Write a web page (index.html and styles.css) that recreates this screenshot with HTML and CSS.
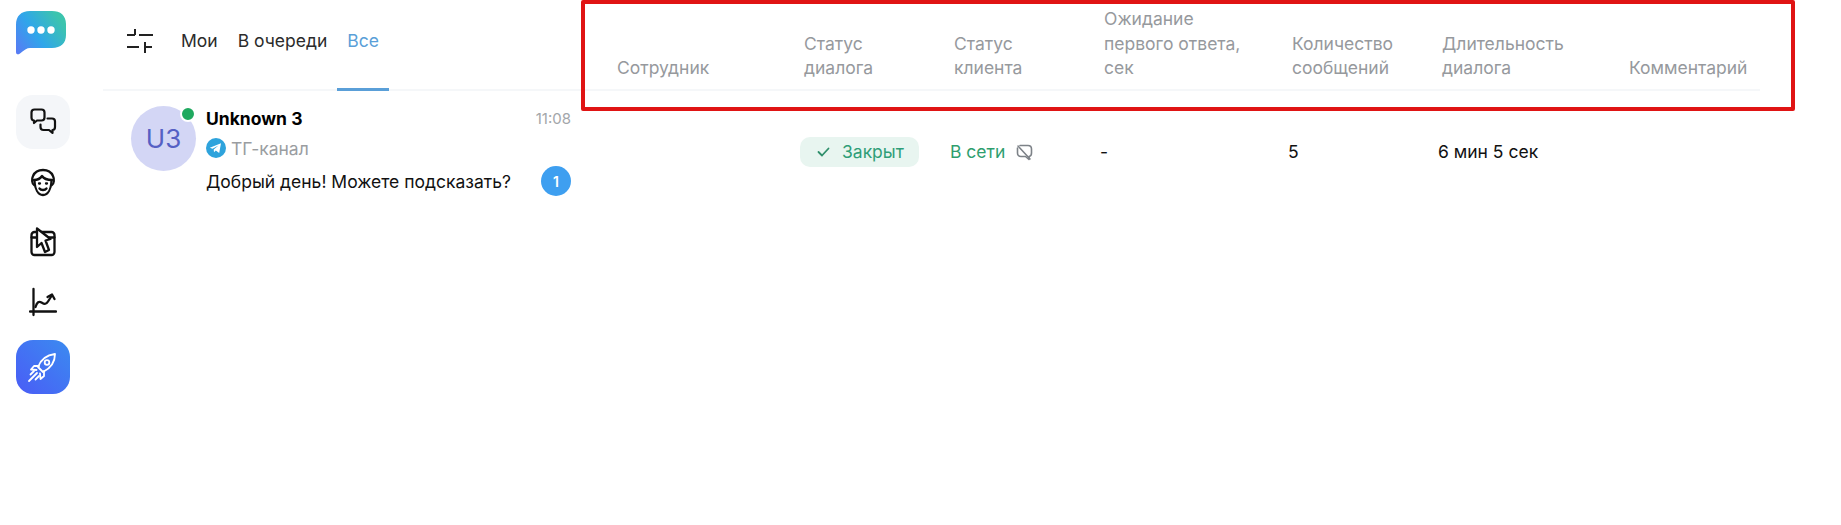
FILE: index.html
```html
<!DOCTYPE html>
<html lang="ru">
<head>
    <meta charset="UTF-8">
    <title>Диалоги</title>
    <link rel="stylesheet" href="styles.css">
</head>
<body>
    <div class="app">
        <nav class="rail">
            <svg class="logo" width="50" height="44" viewBox="0 0 50 44">
                <defs>
                    <linearGradient id="logoGrad" x1="0" y1="1" x2="1" y2="0.4">
                        <stop offset="0" stop-color="#5b78f5"/>
                        <stop offset="0.5" stop-color="#2fa6ea"/>
                        <stop offset="1" stop-color="#3cc4ae"/>
                    </linearGradient>
                </defs>
                <path d="M14 0H36C44.500 0 50 4.500 50 13V24C50 32 45 37 36 37H14C11 37 8 39 4 42.500C2 44 0 43.500 0 41V14C0 5 5 0 14 0Z" fill="url(#logoGrad)"/>
                <circle cx="15" cy="19" r="3.700" fill="#fff"/>
                <circle cx="25" cy="19" r="3.700" fill="#fff"/>
                <circle cx="35" cy="19" r="3.700" fill="#fff"/>
            </svg>

            <a class="rail-btn rail-btn-light">
                <svg width="30" height="30" viewBox="0 0 30 30" fill="none" stroke="#111" stroke-width="2.200" stroke-linejoin="round" stroke-linecap="round">
                    <path d="M3.500 5.500C3.500 3.500 4.500 2.500 6.500 2.500H13.500C15.500 2.500 16.500 3.500 16.500 5.500V10.500C16.500 12.500 15.500 13.500 13.500 13.500H9L6 16V13.500C4.500 13.500 3.500 12.500 3.500 10.500Z"/>
                    <path d="M19.500 11.500H24C26 11.500 27 12.500 27 14.500V20C27 22 26 23 24.500 23V26L21 23H15.500C13.500 23 12.500 22 12.500 20V17.500"/>
                </svg>
            </a>
            <a class="rail-btn">
                <svg width="28" height="30" viewBox="0 0 28 30" fill="none" stroke="#111" stroke-width="2.300" stroke-linecap="round" stroke-linejoin="round">
                    <path d="M5 18C3 17 2.500 12 4 9C6 4.500 10 3 14 3C18 3 22 4.500 24 9C25.500 12 25 17 23 18"/>
                    <path d="M5.500 14C6 22 9 28 14 28C19 28 22 22 22.500 14"/>
                    <path d="M5 13C9 13 11 12 13 9C15 12 19 13 23 13"/>
                    <path d="M10.500 21.500C12 23.500 16 23.500 17.500 21.500"/>
                    <path d="M10 16.500H11M17 16.500H18"/>
                </svg>
            </a>
            <a class="rail-btn">
                <svg width="28" height="30" viewBox="0 0 28 30" fill="none" stroke="#111" stroke-width="2.300" stroke-linejoin="round" stroke-linecap="round">
                    <rect x="2.500" y="5" width="23" height="23" rx="3"/>
                    <path d="M2.500 10.500H25.500"/>
                    <path d="M8 1.500L21.500 12L16.500 13.500L20 23L16 25L12.500 16L8 20Z" fill="#fff"/>
                </svg>
            </a>
            <a class="rail-btn rail-btn-last">
                <svg width="28" height="30" viewBox="0 0 28 30" fill="none" stroke="#111" stroke-width="2.300" stroke-linecap="round" stroke-linejoin="round">
                    <path d="M4.500 2V28"/>
                    <path d="M1 24.500H27"/>
                    <path d="M6.500 20C8 15 10 14 12.500 15.500C15 17 17 18 19 14.500L22.500 9"/>
                    <path d="M18.500 10L23 7.500L25.500 12"/>
                </svg>
            </a>
            <a class="rail-btn rail-btn-blue">
                <svg width="32" height="32" viewBox="0 0 32 32" fill="none" stroke="#fff" stroke-width="1.800" stroke-linecap="round" stroke-linejoin="round">
                    <path d="M11 16C14 8 20 4 28 3C28 11 24 17 16 21Z"/>
                    <circle cx="20" cy="11.500" r="2.300"/>
                    <path d="M12 15H7L4 18.500L9.500 19"/>
                    <path d="M17 20V25L13.500 28L13 22.500"/>
                    <path d="M10 22L2 30M7 20L3.500 23.500M12 25L8.500 28.500"/>
                </svg>
            </a>
        </nav>

        <section class="dialogs">
            <header class="tabs">
                <svg class="filter-icon" width="28" height="26" viewBox="0 0 28 26" fill="none" stroke="#222" stroke-width="2">
                    <path d="M1 7H9M9 1V7M13 7H27"/>
                    <path d="M1 19H13M19 19H26M19 14V25"/>
                </svg>
                <a class="tab">Мои</a>
                <a class="tab">В очереди</a>
                <a class="tab tab-active">Все</a>
            </header>
            <div class="dialog">
                <div class="avatar">U3<span class="online-dot"></span></div>
                <div class="dialog-body">
                    <div class="dialog-line">
                        <b class="dialog-name">Unknown 3</b>
                        <span class="dialog-time">11:08</span>
                    </div>
                    <div class="dialog-source">
                        <svg width="20" height="20" viewBox="0 0 20 20">
                            <circle cx="10" cy="10" r="10" fill="#2ea3dc"/>
                            <path d="M3.800 9.800L15 5.300L13.200 15L9.800 12.600L8 14.300L7.700 11.400L12.500 7.500L6.500 10.800Z" fill="#fff"/>
                        </svg>
                        ТГ-канал
                    </div>
                    <div class="dialog-line dialog-line-last">
                        <span class="dialog-text">Добрый день! Можете подсказать?</span>
                        <span class="unread">1</span>
                    </div>
                </div>
            </div>
        </section>

        <section class="report">
            <div class="report-head">
                <div>Сотрудник</div>
                <div>Статус<br>диалога</div>
                <div>Статус<br>клиента</div>
                <div>Ожидание<br>первого ответа,<br>сек</div>
                <div>Количество<br>сообщений</div>
                <div>Длительность<br>диалога</div>
                <div>Комментарий</div>
            </div>
            <div class="report-row">
                <div></div>
                <div>
                    <span class="status-pill">
                        <svg width="13" height="10" viewBox="0 0 13 10" fill="none" stroke="#2f8f6b" stroke-width="1.800" stroke-linecap="round" stroke-linejoin="round"><path d="M1.500 5L5 8.500L11.500 1.500"/></svg>
                        Закрыт
                    </span>
                </div>
                <div class="client-status">
                    В сети
                    <svg width="17" height="17" viewBox="0 0 17 17" fill="none" stroke="#7d8288" stroke-width="1.600" stroke-linecap="round" stroke-linejoin="round">
                        <path d="M4 1.500H12C14.500 1.500 15.500 3 15.500 5V9C15.500 11 14.500 12.300 13 12.500V15.500L9.500 12.500H5C2.700 12.500 1.500 11 1.500 9V4"/>
                        <path d="M2 2L14 15"/>
                    </svg>
                </div>
                <div>-</div>
                <div>5</div>
                <div>6 мин 5 сек</div>
                <div></div>
            </div>
        </section>
    </div>
    <div class="highlight"></div>
</body>
</html>
```

FILE: styles.css
```css
* {
    margin: 0;
    padding: 0;
    box-sizing: border-box;
}

body {
    height: 525px;
    background: #fff;
    font-family: 'Inter', sans-serif;
    font-size: 17.5px;
    color: #111;
    overflow: hidden;
}

.app {
    display: flex;
    height: 100%;
}

/* left icon rail */
.rail {
    width: 103px;
    flex-shrink: 0;
    padding: 11px 0 0 16px;
    display: flex;
    flex-direction: column;
}

.logo {
    margin-bottom: 40px;
}

.rail-btn {
    width: 54px;
    height: 54px;
    margin-bottom: 6px;
    border-radius: 17px;
    display: flex;
    align-items: center;
    justify-content: center;
}

.rail-btn-last {
    margin-bottom: 11px;
}

.rail-btn-light {
    background: #f4f6f9;
}

.rail-btn-blue {
    background: linear-gradient(45deg, #4a5cf6, #3b8bf0);
}

/* dialogs list */
.dialogs {
    width: 480px;
    flex-shrink: 0;
}

.tabs {
    height: 91px;
    display: flex;
    align-items: flex-start;
    padding-left: 21px;
    border-bottom: 2px solid #f5f7f9;
}

.filter-icon {
    margin: 28px 17px 0 2px;
}

.tab {
    height: 91px;
    padding: 30px 10px 0;
    line-height: 22px;
    color: #2b2b2b;
}

.tab-active {
    color: #5a9fd8;
    border-bottom: 3px solid #5a9fd8;
}

.dialog {
    display: flex;
    padding: 15px 12px 0 28px;
}

.avatar {
    position: relative;
    width: 65px;
    height: 65px;
    flex-shrink: 0;
    border-radius: 50%;
    background: #d3d6f5;
    color: #5560c4;
    font-size: 26px;
    display: flex;
    align-items: center;
    justify-content: center;
}

.online-dot {
    position: absolute;
    top: 0;
    right: 0;
    width: 16px;
    height: 16px;
    border-radius: 50%;
    background: #1fa95f;
    border: 2px solid #fff;
}

.dialog-body {
    flex: 1;
    margin: -1px 0 0 10px;
}

.dialog-line {
    display: flex;
    justify-content: space-between;
    align-items: center;
    height: 26px;
}

.dialog-line-last {
    margin-top: 3px;
}

.dialog-name {
    font-weight: 700;
    color: #000;
}

.dialog-time {
    font-size: 15px;
    color: #a3a6aa;
}

.dialog-source {
    height: 34px;
    display: flex;
    align-items: center;
    gap: 5px;
    color: #9a9da1;
}

.dialog-text {
    color: #111;
}

.unread {
    width: 30px;
    height: 30px;
    border-radius: 50%;
    background: #3e9ff0;
    color: #fff;
    font-size: 14px;
    font-weight: 600;
    display: flex;
    align-items: center;
    justify-content: center;
}

/* report table */
.report {
    flex: 1;
    padding-right: 81px;
}

.report-head,
.report-row {
    display: grid;
    grid-template-columns: 187px 150px 150px 188px 150px 187px 1fr;
}

.report-head {
    height: 91px;
    padding: 7px 0 8px 34px;
    align-items: end;
    line-height: 24.600px;
    color: #96999d;
    border-bottom: 2px solid #f5f7f9;
}

.report-row {
    padding: 46px 0 0 30px;
    align-items: center;
    line-height: 26px;
}

.status-pill {
    display: inline-flex;
    align-items: center;
    gap: 12px;
    width: 119px;
    height: 30px;
    padding-left: 17px;
    border-radius: 10px;
    background: #e8f5f0;
    color: #2f9e78;
}

.client-status {
    display: flex;
    align-items: center;
    gap: 11px;
    color: #2f9e6e;
}

/* red annotation frame drawn over the table head */
.highlight {
    position: absolute;
    left: 581px;
    top: 0;
    width: 1214px;
    height: 111px;
    border: 4px solid #e01414;
    border-radius: 2px;
    pointer-events: none;
}
```
